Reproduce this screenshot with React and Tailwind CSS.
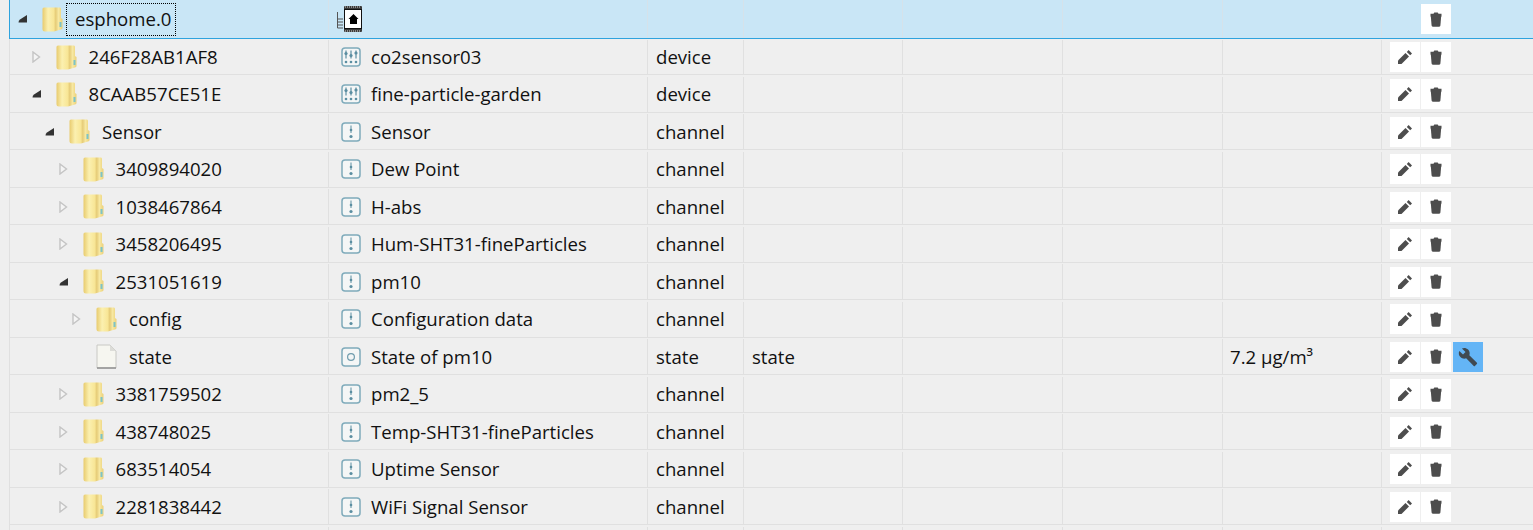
const rows = [
  { id: "esphome.0", level: 0, open: true, name: "", icon: "chip", selected: true },
  { id: "246F28AB1AF8", level: 1, open: false, name: "co2sensor03", icon: "device", type: "device" },
  { id: "8CAAB57CE51E", level: 1, open: true, name: "fine-particle-garden", icon: "device", type: "device" },
  { id: "Sensor", level: 2, open: true, name: "Sensor", icon: "channel", type: "channel" },
  { id: "3409894020", level: 3, open: false, name: "Dew Point", icon: "channel", type: "channel" },
  { id: "1038467864", level: 3, open: false, name: "H-abs", icon: "channel", type: "channel" },
  { id: "3458206495", level: 3, open: false, name: "Hum-SHT31-fineParticles", icon: "channel", type: "channel" },
  { id: "2531051619", level: 3, open: true, name: "pm10", icon: "channel", type: "channel" },
  { id: "config", level: 4, open: false, name: "Configuration data", icon: "channel", type: "channel" },
  { id: "state", level: 4, file: true, name: "State of pm10", icon: "state", type: "state", role: "state", value: "7.2 µg/m³", wrench: true },
  { id: "3381759502", level: 3, open: false, name: "pm2_5", icon: "channel", type: "channel" },
  { id: "438748025", level: 3, open: false, name: "Temp-SHT31-fineParticles", icon: "channel", type: "channel" },
  { id: "683514054", level: 3, open: false, name: "Uptime Sensor", icon: "channel", type: "channel" },
  { id: "2281838442", level: 3, open: false, name: "WiFi Signal Sensor", icon: "channel", type: "channel" },
  { id: "", level: 3, blank: true },
];

const Toggle = ({ open }) =>
  open ? (
    <svg width="10" height="8" viewBox="0 0 10 8" className="shrink-0">
      <path d="M9 0 L9 7.5 L0.5 7.5 Q0.5 5.5 2 4.5 Z" fill="#333333" />
    </svg>
  ) : (
    <svg width="9" height="12" viewBox="0 0 9 12" className="shrink-0">
      <path d="M1 1 L7.5 6 L1 11 Z" fill="#f4f4f4" stroke="#c4c4c4" strokeWidth="1.4" />
    </svg>
  );

const Folder = () => (
  <svg width="21" height="25" viewBox="0 0 21 25" className="shrink-0">
    <defs>
      <linearGradient id="fa" x1="0" x2="1" y1="0" y2="0">
        <stop offset="0" stopColor="#e8cb6e" />
        <stop offset="0.28" stopColor="#fbf0b0" />
        <stop offset="0.56" stopColor="#f8e696" />
        <stop offset="0.66" stopColor="#e6cc78" />
        <stop offset="0.8" stopColor="#f7e8a2" />
        <stop offset="1" stopColor="#ebd078" />
      </linearGradient>
    </defs>
    <path d="M0.5 2 Q0.5 0.5 2 0.5 L18 0.5 Q19 0.5 19 2 L19 11 L20.5 12 L20.5 21 Q20.5 22 19 22.5 L12 24.5 L3 24.5 Q0.5 24.5 0.5 22 Z" fill="url(#fa)" />
    <rect x="17.5" y="15" width="2" height="5" fill="#7cc4c8" />
  </svg>
);

const FileIcon = () => (
  <svg width="21" height="25" viewBox="0 0 21 25" className="shrink-0">
    <path d="M1 1 L14 1 L20 7 L20 24 L1 24 Z" fill="#f6f6f0" stroke="#c8c8c4" strokeWidth="1" />
    <path d="M14 1 L14 7 L20 7 Z" fill="#dcdcd8" />
    <path d="M1 24 L20 24" stroke="#8c8c8c" strokeWidth="1.4" />
  </svg>
);

const TypeIcon = ({ kind }) => {
  if (kind === "chip") {
    return (
      <svg width="26" height="28" viewBox="0 0 26 28" className="shrink-0 -ml-[4px]">
        <rect x="7" y="1" width="18" height="26" rx="1" fill="#3a3a3a" />
        <path d="M8 2 H24 M8 26 H24" stroke="#d8d8d8" strokeWidth="1" strokeDasharray="1 1" />
        <rect x="7.5" y="4.5" width="17" height="19" fill="#ffffff" stroke="#111111" strokeWidth="1" />
        <path d="M16.5 9 L21.5 14 L20 14 L20 19 L13 19 L13 14 L11.5 14 Z" fill="#000000" />
        <path d="M0.5 7 V14 H6 M0.5 14 V23 H6 M0.5 17 H6 M0.5 20 H6" stroke="#555555" strokeWidth="1" fill="none" />
      </svg>
    );
  }
  return (
    <svg width="20" height="20" viewBox="0 0 20 20" className="shrink-0">
      <rect x="1" y="1" width="18" height="18" rx="3" fill="#f4f6f6" stroke="#7fabbb" strokeWidth="1.5" />
      {kind === "channel" && (
        <g fill="#5b8ea1" stroke="#5b8ea1">
          <path d="M10 3.5 V11" strokeWidth="1" />
          <circle cx="10" cy="8" r="1.3" stroke="none" />
          <circle cx="10" cy="14.5" r="1.6" stroke="none" />
        </g>
      )}
      {kind === "state" && <circle cx="10" cy="10" r="3.4" fill="none" stroke="#6f9cad" strokeWidth="1.2" />}
      {kind === "device" && (
        <g fill="#5b8ea1" stroke="#5b8ea1">
          <path d="M5 3.5 V11.5 M10 3.5 V11.5 M15 3.5 V11.5" strokeWidth="1.2" />
          <circle cx="5" cy="6.5" r="1.6" stroke="none" />
          <circle cx="10" cy="8.5" r="1.6" stroke="none" />
          <circle cx="15" cy="6" r="1.6" stroke="none" />
          <circle cx="5" cy="15" r="1.3" stroke="none" />
          <circle cx="10" cy="15" r="1.3" stroke="none" />
          <circle cx="15" cy="15" r="1.3" stroke="none" />
        </g>
      )}
    </svg>
  );
};

const ActionButton = ({ className, children }) => (
  <button className={`w-[30px] h-[30px] flex items-center justify-center ${className}`}>{children}</button>
);

const PencilIcon = () => (
  <svg width="16" height="16" viewBox="0 0 16 16" fill="#4d4d4d">
    <path d="M1 11.5 L1 15 L4.5 15 L12 7.5 L8.5 4 Z" />
    <path d="M9.8 2.9 L13.2 6.3 L15 4.4 L11.6 1 Z" />
  </svg>
);

const TrashIcon = () => (
  <svg width="12" height="15" viewBox="0 0 12 15" fill="#4d4d4d">
    <path d="M0.5 1.8 H3.5 L4.3 0.6 H7.7 L8.5 1.8 H11.5 V4.5 H0.5 Z" />
    <path d="M0.8 4 H11.2 L10.4 13.6 Q10.3 14.7 9.2 14.7 H2.8 Q1.7 14.7 1.6 13.6 Z" />
  </svg>
);

const WrenchIcon = () => (
  <svg width="20" height="20" viewBox="0 0 24 24" fill="#404a52">
    <path d="M22.7 19l-9.1-9.1c.9-2.3.4-5-1.5-6.9-2-2-5-2.4-7.4-1.3L9 6 6 9 1.6 4.7C.4 7.1.9 10.1 2.9 12.1c1.9 1.9 4.6 2.4 6.9 1.5l9.1 9.1c.4.4 1 .4 1.4 0l2.3-2.3c.5-.4.5-1.1.1-1.4z" />
  </svg>
);

const Row = ({ row, index }) => {
  const height = row.selected
    ? "h-[39px] bg-[#c9e6f6] border-b-[#2ea3de] border-l-[#2ea3de]"
    : index === 1
      ? "h-[36px] pt-[1px] border-b-[#e0e0e0] border-l-[#e0e0e0]"
      : "h-[37.5px] pt-[1.5px] border-b-[#e0e0e0] border-l-[#e0e0e0]";
  const line = row.selected ? "border-r border-[#d5e2ea]" : "border-r border-[#e0e0e0]";
  const left = 8 + row.level * 13.5;

  return (
    <div
      className={`grid grid-cols-[319px_319px_96px_159px_160px_160px_159px_1fr] ml-[9px] border-l border-b text-[18.6px] text-[#111111] ${height}`}
    >
      <div className={`flex items-center min-w-0 ${line}`} style={{ paddingLeft: left }}>
        {!row.blank && (
          <>
            <div className="w-[24px] flex items-center">
              {!row.file && <Toggle open={row.open} />}
            </div>
            {row.file ? <FileIcon /> : <Folder />}
            {row.selected ? (
              <span className="ml-[3px] h-[33px] w-[110px] flex items-center pl-[8px] border border-dotted border-black">
                {row.id}
              </span>
            ) : (
              <span className="ml-[12px]">{row.id}</span>
            )}
          </>
        )}
      </div>
      <div className={`flex items-center pl-[12px] gap-[10px] ${line}`}>
        {row.icon && <TypeIcon kind={row.icon} />}
        <span>{row.name}</span>
      </div>
      <div className={`flex items-center pl-[8px] ${line}`}>{row.type}</div>
      <div className={`flex items-center pl-[8px] ${line}`}>{row.role}</div>
      <div className={line} />
      <div className={line} />
      <div className={`flex items-center pl-[7px] ${line}`}>{row.value}</div>
      {!row.blank && (
        <div className="flex items-center pl-[8px]">
          <div className="flex items-center gap-[1px]">
            {row.selected ? (
              <div className="w-[30px] h-[30px]" />
            ) : (
              <ActionButton className="bg-white">
                <PencilIcon />
              </ActionButton>
            )}
            <ActionButton className="bg-white">
              <TrashIcon />
            </ActionButton>
            {row.wrench && (
              <ActionButton className="bg-[#64b5f6] ml-[1px]">
                <WrenchIcon />
              </ActionButton>
            )}
          </div>
        </div>
      )}
    </div>
  );
};

export default function App() {
  return (
    <div className="h-[530px] overflow-hidden bg-[#efefef] font-['Open_Sans','Noto_Sans',sans-serif]">
      {rows.map((row, index) => (
        <Row key={row.id || index} row={row} index={index} />
      ))}
    </div>
  );
}
